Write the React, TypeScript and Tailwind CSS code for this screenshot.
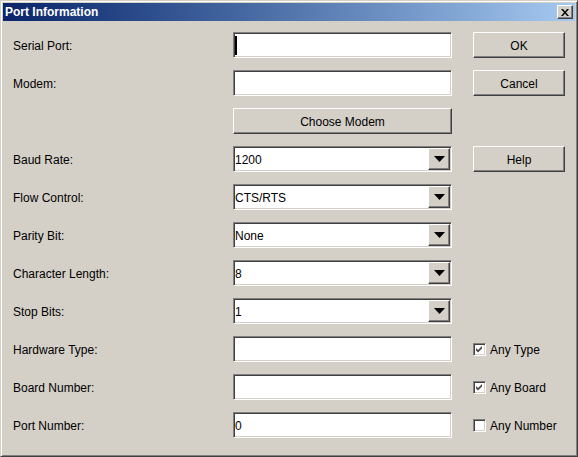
const sunken =
  "border border-t-[#808080] border-l-[#808080] border-b-white border-r-white shadow-[inset_1px_1px_0_#404040,inset_-1px_-1px_0_#d4d0c8]";
const raised =
  "border border-t-white border-l-white border-r-[#404040] border-b-[#404040] shadow-[inset_-1px_-1px_0_#808080,inset_1px_1px_0_#d4d0c8] bg-[#d4d0c8]";

function Label({ text }: { text: string }) {
  return <div className="flex h-[26px] items-center pt-[2px]">{text}</div>;
}

function TextField({ value = "", focused = false }: { value?: string; focused?: boolean }) {
  return (
    <div className={`flex h-[26px] items-center bg-white pl-[1px] ${sunken}`}>
      {focused && <div className="h-[19px] w-[2px] bg-black" />}
      <span className="pt-[2px]">{value}</span>
    </div>
  );
}

function Combo({ value }: { value: string }) {
  return (
    <div className={`flex h-[26px] items-center bg-white p-[1px] ${sunken}`}>
      <span className="flex-1 pt-[2px]">{value}</span>
      <div className={`flex h-[22px] w-[22px] items-center justify-center ${raised}`}>
        <svg width="11" height="6" viewBox="0 0 11 6">
          <path d="M0 0 H11 L5.5 6 Z" fill="#000" />
        </svg>
      </div>
    </div>
  );
}

function Button({ text }: { text: string }) {
  return (
    <div className={`flex h-[26px] items-center justify-center pt-[2px] ${raised}`}>{text}</div>
  );
}

function Check({ text, checked }: { text: string; checked: boolean }) {
  return (
    <div className="flex h-[26px] items-center gap-[4px]">
      <div className={`flex h-[13px] w-[13px] items-center justify-center bg-white ${sunken}`}>
        {checked && (
          <svg width="7" height="7" viewBox="0 0 7 7">
            <path d="M0 2 L2 4 L6 0 L6 2.5 L2 6.5 L0 4.5 Z" fill="#4a4a4a" />
          </svg>
        )}
      </div>
      <span className="pt-[2px]">{text}</span>
    </div>
  );
}

export default function App() {
  return (
    <div className="h-[457px] w-[578px] border border-t-[#d4d0c8] border-l-[#d4d0c8] border-r-[#404040] border-b-[#404040] bg-[#d4d0c8] p-[2px] font-['Liberation_Sans',Arial,sans-serif] text-[12px] text-black shadow-[inset_1px_1px_0_#fff,inset_-1px_-1px_0_#808080]">
      <div className="flex h-[18px] items-center justify-between bg-linear-to-r from-[#0a246a] to-[#a6caf0] pl-[2px] pr-[2px]">
        <span className="text-[12px] font-bold text-white">Port Information</span>
        <div className={`flex h-[14px] w-[16px] items-center justify-center ${raised}`}>
          <svg width="8" height="7" viewBox="0 0 8 7">
            <path d="M0 0 H2 L4 2.5 L6 0 H8 L5 3.5 L8 7 H6 L4 4.5 L2 7 H0 L3 3.5 Z" fill="#000" />
          </svg>
        </div>
      </div>
      <div className="grid grid-cols-[199px_219px_92px] gap-x-[21px] gap-y-[12px] pl-[10px] pt-[11px]">
        <Label text="Serial Port:" />
        <TextField focused />
        <Button text="OK" />

        <Label text="Modem:" />
        <TextField />
        <Button text="Cancel" />

        <div />
        <Button text="Choose Modem" />
        <div />

        <Label text="Baud Rate:" />
        <Combo value="1200" />
        <Button text="Help" />

        <Label text="Flow Control:" />
        <Combo value="CTS/RTS" />
        <div />

        <Label text="Parity Bit:" />
        <Combo value="None" />
        <div />

        <Label text="Character Length:" />
        <Combo value="8" />
        <div />

        <Label text="Stop Bits:" />
        <Combo value="1" />
        <div />

        <Label text="Hardware Type:" />
        <TextField />
        <Check text="Any Type" checked />

        <Label text="Board Number:" />
        <TextField />
        <Check text="Any Board" checked />

        <Label text="Port Number:" />
        <TextField value="0" />
        <Check text="Any Number" checked={false} />
      </div>
    </div>
  );
}
